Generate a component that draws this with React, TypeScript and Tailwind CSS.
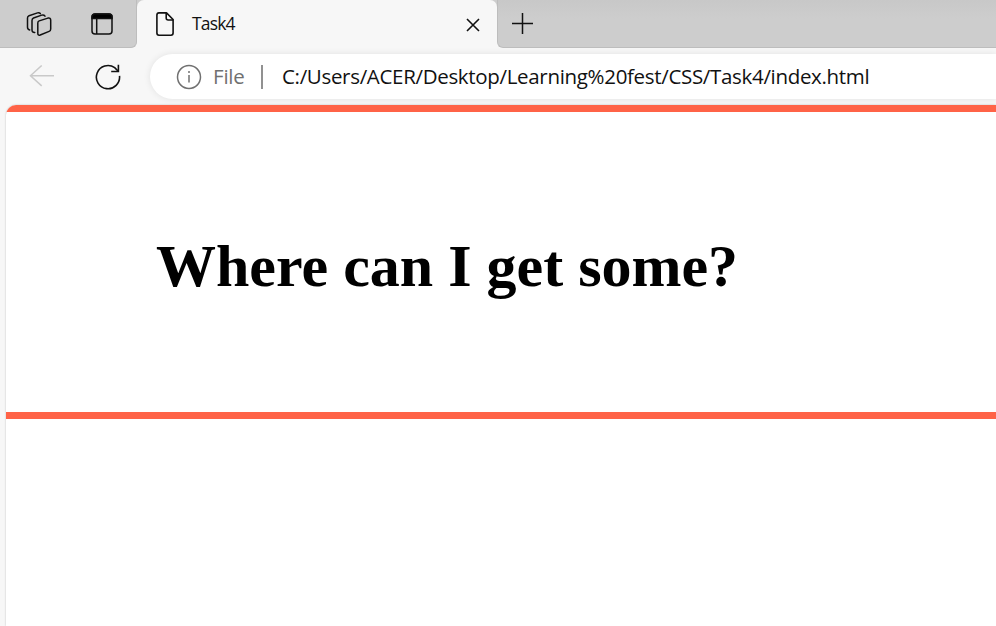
const ui = "font-['Open_Sans','Noto_Sans',sans-serif]";

function WorkspacesIcon() {
  return (
    <svg width="26" height="26" viewBox="0 0 26 26" fill="none" stroke="#111" strokeWidth="1.5" strokeLinecap="round" strokeLinejoin="round">
      <path d="M13.2 8.9 21.9 6.1Q24.7 5.4 24.7 8.2V16.9Q24.7 18.8 23.1 19.4L14.2 23Q11.8 23.7 11.8 21.2V11Q11.8 9.4 13.2 8.9Z" />
      <path d="M8.8 20.4Q6 20.6 6 18V8.4Q6 6.6 7.5 6L15.7 3.1Q17.9 2.5 19 4.1" />
      <path d="M3.7 17.9Q1.5 17.5 1.5 15.2V6Q1.5 4.3 3 3.7L11.5.9Q13.3.4 14.3 1.6" />
    </svg>
  );
}

function TabStrip() {
  return (
    <div className="flex h-12 bg-linear-to-b from-[#cdcdcd] from-50% to-[#f7f7f7] to-50%">
      <div className="flex w-[137px] items-start rounded-br-[6px] border-r border-b border-[#bdbdbd] bg-[#cdcdcd] pt-3 pl-[26px]">
        <WorkspacesIcon />
        <svg className="ml-[39px] mt-px" width="22" height="22" viewBox="0 0 22 22" fill="none" stroke="#111" strokeWidth="1.5">
          <rect x="1" y="1" width="20" height="20" rx="3" />
          <path d="M1 5.5V4a3 3 0 0 1 3-3h14a3 3 0 0 1 3 3v1.5Z" fill="#000" />
          <path d="M5.7 6v15" />
        </svg>
      </div>
      <div className="flex w-[360px] items-start rounded-t-[7px] bg-[#f7f7f7] pl-[19px]">
        <svg className="mt-3" width="18" height="24" viewBox="0 0 18 24" fill="none" stroke="#111" strokeWidth="1.6" strokeLinejoin="round">
          <path d="M3 .9h7.5l6.6 6.6V21a2.2 2.2 0 0 1-2.2 2.2H3A2.2 2.2 0 0 1 .9 21V3A2.2 2.2 0 0 1 3 .9Z" />
          <path d="M10.2 1v5a2 2 0 0 0 2 2h5" />
        </svg>
        <span className={`${ui} ml-[18px] mt-[11px] text-[17.5px] leading-[25px] tracking-[-0.85px] text-[#111]`}>Task4</span>
        <svg className="mr-[17px] mt-[18px] ml-auto" width="14" height="14" viewBox="0 0 14 14" stroke="#111" strokeWidth="1.6">
          <path d="m1 1 12 12M13 1 1 13" />
        </svg>
      </div>
      <div className="flex-1 rounded-bl-[6px] border-b border-l border-[#bdbdbd] bg-linear-to-b from-[#c8c8c8] to-[#cdcdcd] to-40% pt-[13px] pl-[14px]">
        <svg width="22" height="22" viewBox="0 0 22 22" stroke="#111" strokeWidth="1.5">
          <path d="M0 10.5h21M10.5 0v21" />
        </svg>
      </div>
    </div>
  );
}

function Toolbar() {
  return (
    <div className="flex h-[57px] items-start bg-[#f7f7f7]">
      <svg className="mt-[17px] ml-[29px]" width="26" height="22" viewBox="0 0 26 22" fill="none" stroke="#c9c9c9" strokeWidth="1.5">
        <path d="M25 10.7H1.5M12.7.5 1.5 10.7l11.2 10.2" />
      </svg>
      <svg className="mt-4 ml-10" width="26" height="26" viewBox="0 0 26 26" fill="none" stroke="#111" strokeWidth="1.6">
        <path d="M24.5 11.8A11.6 11.6 0 1 1 19.7 3.7L23.2 7.2" />
        <path d="M23.4.8v6.7h-7.2" />
      </svg>
      <div className={`${ui} mt-1.5 ml-[29px] flex h-[45px] flex-1 items-center rounded-l-full bg-white pl-[26px] text-[20.5px] leading-7 shadow-[0_0_7px_rgba(0,0,0,0.09)]`}>
        <svg width="26" height="26" viewBox="0 0 26 26" fill="none" stroke="#707070" strokeWidth="1.5">
          <circle cx="13" cy="13" r="11.5" />
          <path d="M13 11v7.5" />
          <circle cx="13" cy="8" r="1" fill="#707070" stroke="none" />
        </svg>
        <span className="mb-0.5 ml-[11px] w-[32px] tracking-[-0.2px] whitespace-nowrap text-[#707070]">File</span>
        <span className="ml-4 h-6 w-0.5 bg-[#919191]" />
        <span className="mb-0.5 ml-[19px] whitespace-nowrap tracking-[-0.32px] text-[#111]">C:/Users/ACER/Desktop/Learning%20fest/CSS/Task4/index.html</span>
      </div>
    </div>
  );
}

export default function App() {
  return (
    <div className="flex h-[626px] w-[996px] flex-col overflow-hidden bg-[#f7f7f7]">
      <TabStrip />
      <Toolbar />
      <main className="ml-[6px] flex-1 overflow-hidden rounded-tl-[10px] bg-white shadow-[0_0_2px_rgba(0,0,0,0.25)]">
        <section className="h-[314px] border-y-[7px] border-[#ff6347] pt-[120px] pl-[150px]">
          <h1 className="font-['Liberation_Serif',serif] text-[60px] leading-[69px] font-bold whitespace-nowrap text-black">Where can I get some?</h1>
        </section>
      </main>
    </div>
  );
}
